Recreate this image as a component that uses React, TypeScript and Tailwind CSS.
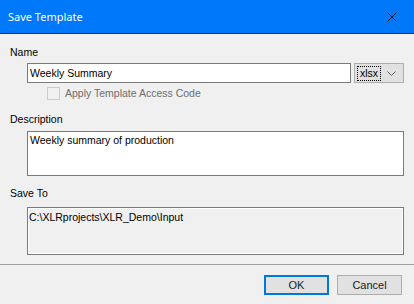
import { useState } from "react";

const SaveTemplateDialog = () => {
  const [name, setName] = useState("Weekly Summary");
  const [description, setDescription] = useState("Weekly summary of production");

  return (
    <div className="flex h-[304px] w-[414px] flex-col bg-[#f0f0f0] font-['Liberation_Sans',Arial,sans-serif] text-[10.5px] leading-[13px] text-black">
      {/* Title bar */}
      <div className="flex h-[34px] shrink-0 items-center justify-between border-b border-[#2b2b2b] bg-[#0078fa] pl-[8px] pr-[17px]">
        <span className="font-['Noto_Sans',sans-serif] text-[11px] text-white">
          Save Template
        </span>
        <svg width="10" height="10" viewBox="0 0 10 10" className="text-[#1b1b1b]">
          <path d="M0.5 0.5 L9.5 9.5 M9.5 0.5 L0.5 9.5" stroke="currentColor" strokeWidth="1" fill="none" />
        </svg>
      </div>

      {/* Body */}
      <div className="flex flex-col pl-[10px] pr-[10px] pt-[12px]">
        <label className="h-[13px]">Name</label>

        <div className="mt-[4px] flex h-[20px] pl-[17px]">
          <input
            value={name}
            onChange={(e) => setName(e.target.value)}
            className="h-[20px] w-[324px] border border-[#7a7a7a] bg-white px-[2px] text-[10.5px] outline-none"
          />
          <div className="ml-[3px] flex h-[20px] w-[50px] items-center border border-[#adadad] bg-[#e1e1e1]">
            <span className="ml-[2px] flex h-[15px] items-center border border-dotted border-black px-[2px] leading-[13px]">
              xlsx
            </span>
            <svg width="9" height="5" viewBox="0 0 9 5" className="ml-[6px]">
              <path d="M0.5 0.5 L4.5 4.5 L8.5 0.5" stroke="#606060" strokeWidth="1" fill="none" />
            </svg>
          </div>
        </div>

        <div className="mt-[4px] flex h-[13px] items-center pl-[37px]">
          <span className="h-[13px] w-[13px] border border-[#cccccc] bg-[#f0f0f0]" />
          <span className="ml-[5px] text-[#6d6d6d]">Apply Template Access Code</span>
        </div>

        <label className="mt-[13px] h-[13px]">Description</label>
        <div className="mt-[5px] pl-[17px]">
          <textarea
            value={description}
            onChange={(e) => setDescription(e.target.value)}
            className="block h-[45px] w-[377px] resize-none border border-[#7a7a7a] bg-white px-[2px] pt-[2px] text-[10.5px] leading-[13px] outline-none"
          />
        </div>

        <label className="mt-[11px] h-[13px]">Save To</label>
        <div className="mt-[7px] pl-[17px]">
          <div className="h-[48px] w-[377px] border border-[#7a7a7a] bg-[#f0f0f0] px-[1px] pt-[3px] shadow-[inset_0_0_0_1px_#ffffff]">
            C:\XLRprojects\XLR_Demo\Input
          </div>
        </div>
      </div>

      {/* Separator */}
      <div className="mt-[9px] h-px w-full bg-[#a0a0a0]" />

      {/* Buttons */}
      <div className="mt-[10px] flex justify-end gap-[8px] pr-[12px]">
        <button className="h-[20px] w-[65px] border-2 border-[#0078d7] bg-[#e1e1e1] text-[11px] text-[#1b1b1b]">
          OK
        </button>
        <button className="h-[20px] w-[65px] border border-[#adadad] bg-[#e1e1e1] text-[11px] text-[#1b1b1b]">
          Cancel
        </button>
      </div>
    </div>
  );
};

export default function App() {
  return <SaveTemplateDialog />;
}
